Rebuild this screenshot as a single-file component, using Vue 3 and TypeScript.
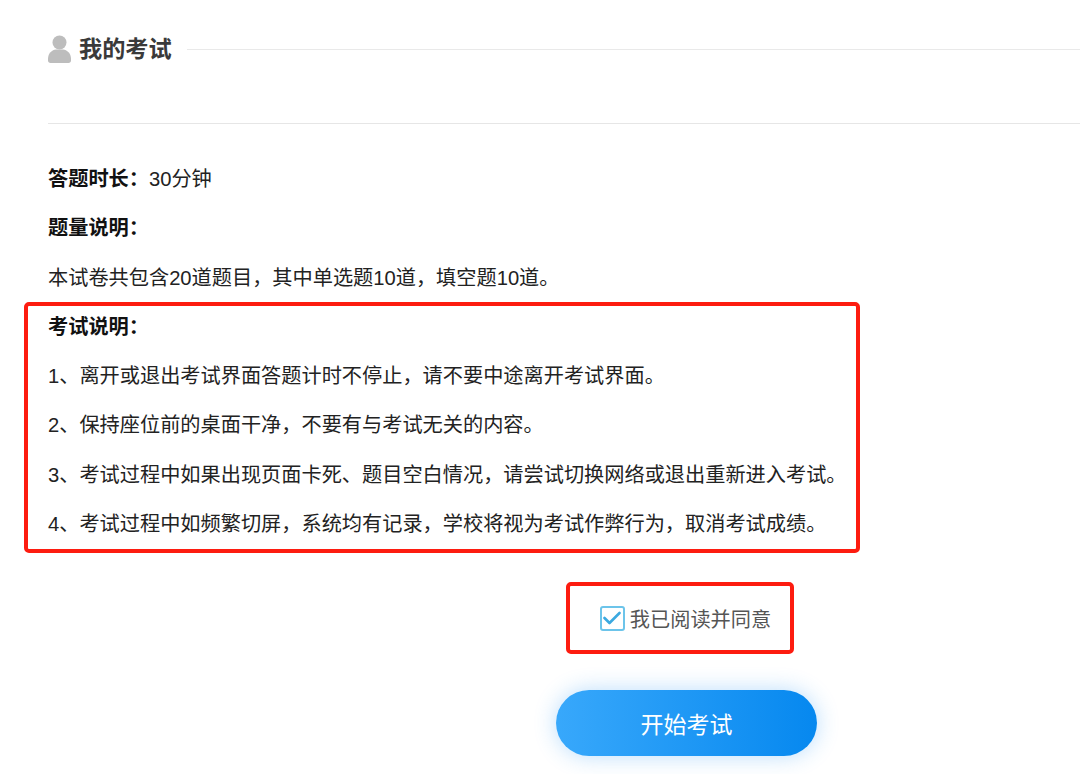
<template>
  <div class="page">
    <div class="title-row">
      <svg class="user-icon" width="23" height="28" viewBox="0 0 23 28">
        <circle cx="11.5" cy="7.5" r="7" fill="#bdbdbd" />
        <path d="M0 24c0-6 4-9 8-9.500h7c4 .5 8 3.500 8 9.500v1.500c0 1.500-1 2.500-2.500 2.500h-18C1 28 0 27 0 25.500z" fill="#bdbdbd" />
      </svg>
      <h2 class="title">我的考试</h2>
      <div class="title-line"></div>
    </div>
    <div class="divider"></div>

    <div class="info">
      <p><b>答题时长：</b>30分钟</p>
      <p><b>题量说明：</b></p>
      <p>本试卷共包含20道题目，其中单选题10道，填空题10道。</p>
      <div class="rules">
        <p><b>考试说明：</b></p>
        <p v-for="r in rules" :key="r">{{ r }}</p>
        <div class="mark mark-rules"></div>
      </div>
    </div>

    <div class="actions">
      <label class="agree">
        <span class="check">
          <svg width="18" height="14" viewBox="0 0 18 14">
            <path d="M1.500 7l5 5L16.500 2" fill="none" stroke="#3ba9e0" stroke-width="2.600" stroke-linecap="round" stroke-linejoin="round" />
          </svg>
        </span>
        <span class="agree-text">我已阅读并同意</span>
        <div class="mark mark-agree"></div>
      </label>
      <button class="start">开始考试</button>
    </div>
  </div>
</template>

<script setup lang="ts">
const rules: string[] = [
  '1、离开或退出考试界面答题计时不停止，请不要中途离开考试界面。',
  '2、保持座位前的桌面干净，不要有与考试无关的内容。',
  '3、考试过程中如果出现页面卡死、题目空白情况，请尝试切换网络或退出重新进入考试。',
  '4、考试过程中如频繁切屏，系统均有记录，学校将视为考试作弊行为，取消考试成绩。'
]
</script>

<style>
html,
body {
  background: #fff;
  overflow: hidden;
}
</style>

<style scoped>
.page {
  width: 1080px;
  height: 774px;
  box-sizing: border-box;
  padding: 35px 0 0 48px;
  overflow: hidden;
  font-family: "Liberation Sans", "Noto Sans CJK SC", sans-serif;
  color: #222;
}

.title-row {
  display: flex;
  align-items: center;
  height: 28px;
}

.title {
  margin: 0 0 0 8px;
  font-size: 23.2px;
  line-height: 28px;
  font-weight: 700;
  color: #3a3a3a;
}

.title-line {
  flex: 1;
  height: 1px;
  margin: 0 0 0 15px;
  background: #e9e9e9;
}

.divider {
  height: 1px;
  margin-top: 60px;
  background: #e6e6e6;
}

.info {
  margin-top: 31px;
  font-size: 20.2px;
  line-height: 49.3px;
}

.info p {
  margin: 0;
  white-space: nowrap;
}

.info b {
  color: #111;
}

.rules {
  position: relative;
}

.mark {
  position: absolute;
  box-sizing: border-box;
  border: 4px solid #fd1c10;
  border-radius: 5px;
  pointer-events: none;
}

.mark-rules {
  left: -24px;
  top: -1px;
  width: 836px;
  height: 251px;
}

.actions {
  width: 261px;
  margin: 53px 0 0 508px;
  display: flex;
  flex-direction: column;
  align-items: center;
}

.agree {
  position: relative;
  display: flex;
  align-items: center;
  height: 28px;
  margin-top: 2px;
  transform: translateX(-1px);
}

.mark-agree {
  left: -34px;
  top: -22px;
  width: 228px;
  height: 72px;
}

.check {
  box-sizing: border-box;
  width: 25px;
  height: 25px;
  border: 2px solid #6cc4ea;
  border-radius: 3px;
  display: flex;
  align-items: center;
  justify-content: center;
}

.agree-text {
  margin-left: 5px;
  font-size: 20.2px;
  color: #555;
}

.start {
  width: 261px;
  height: 66px;
  margin-top: 58px;
  border: none;
  border-radius: 33px;
  background: linear-gradient(90deg, #38a8fb, #0688ef);
  box-shadow: 0 0 22px rgba(40, 150, 245, 0.32);
  color: #fff;
  font-family: inherit;
  font-size: 23px;
}
</style>
